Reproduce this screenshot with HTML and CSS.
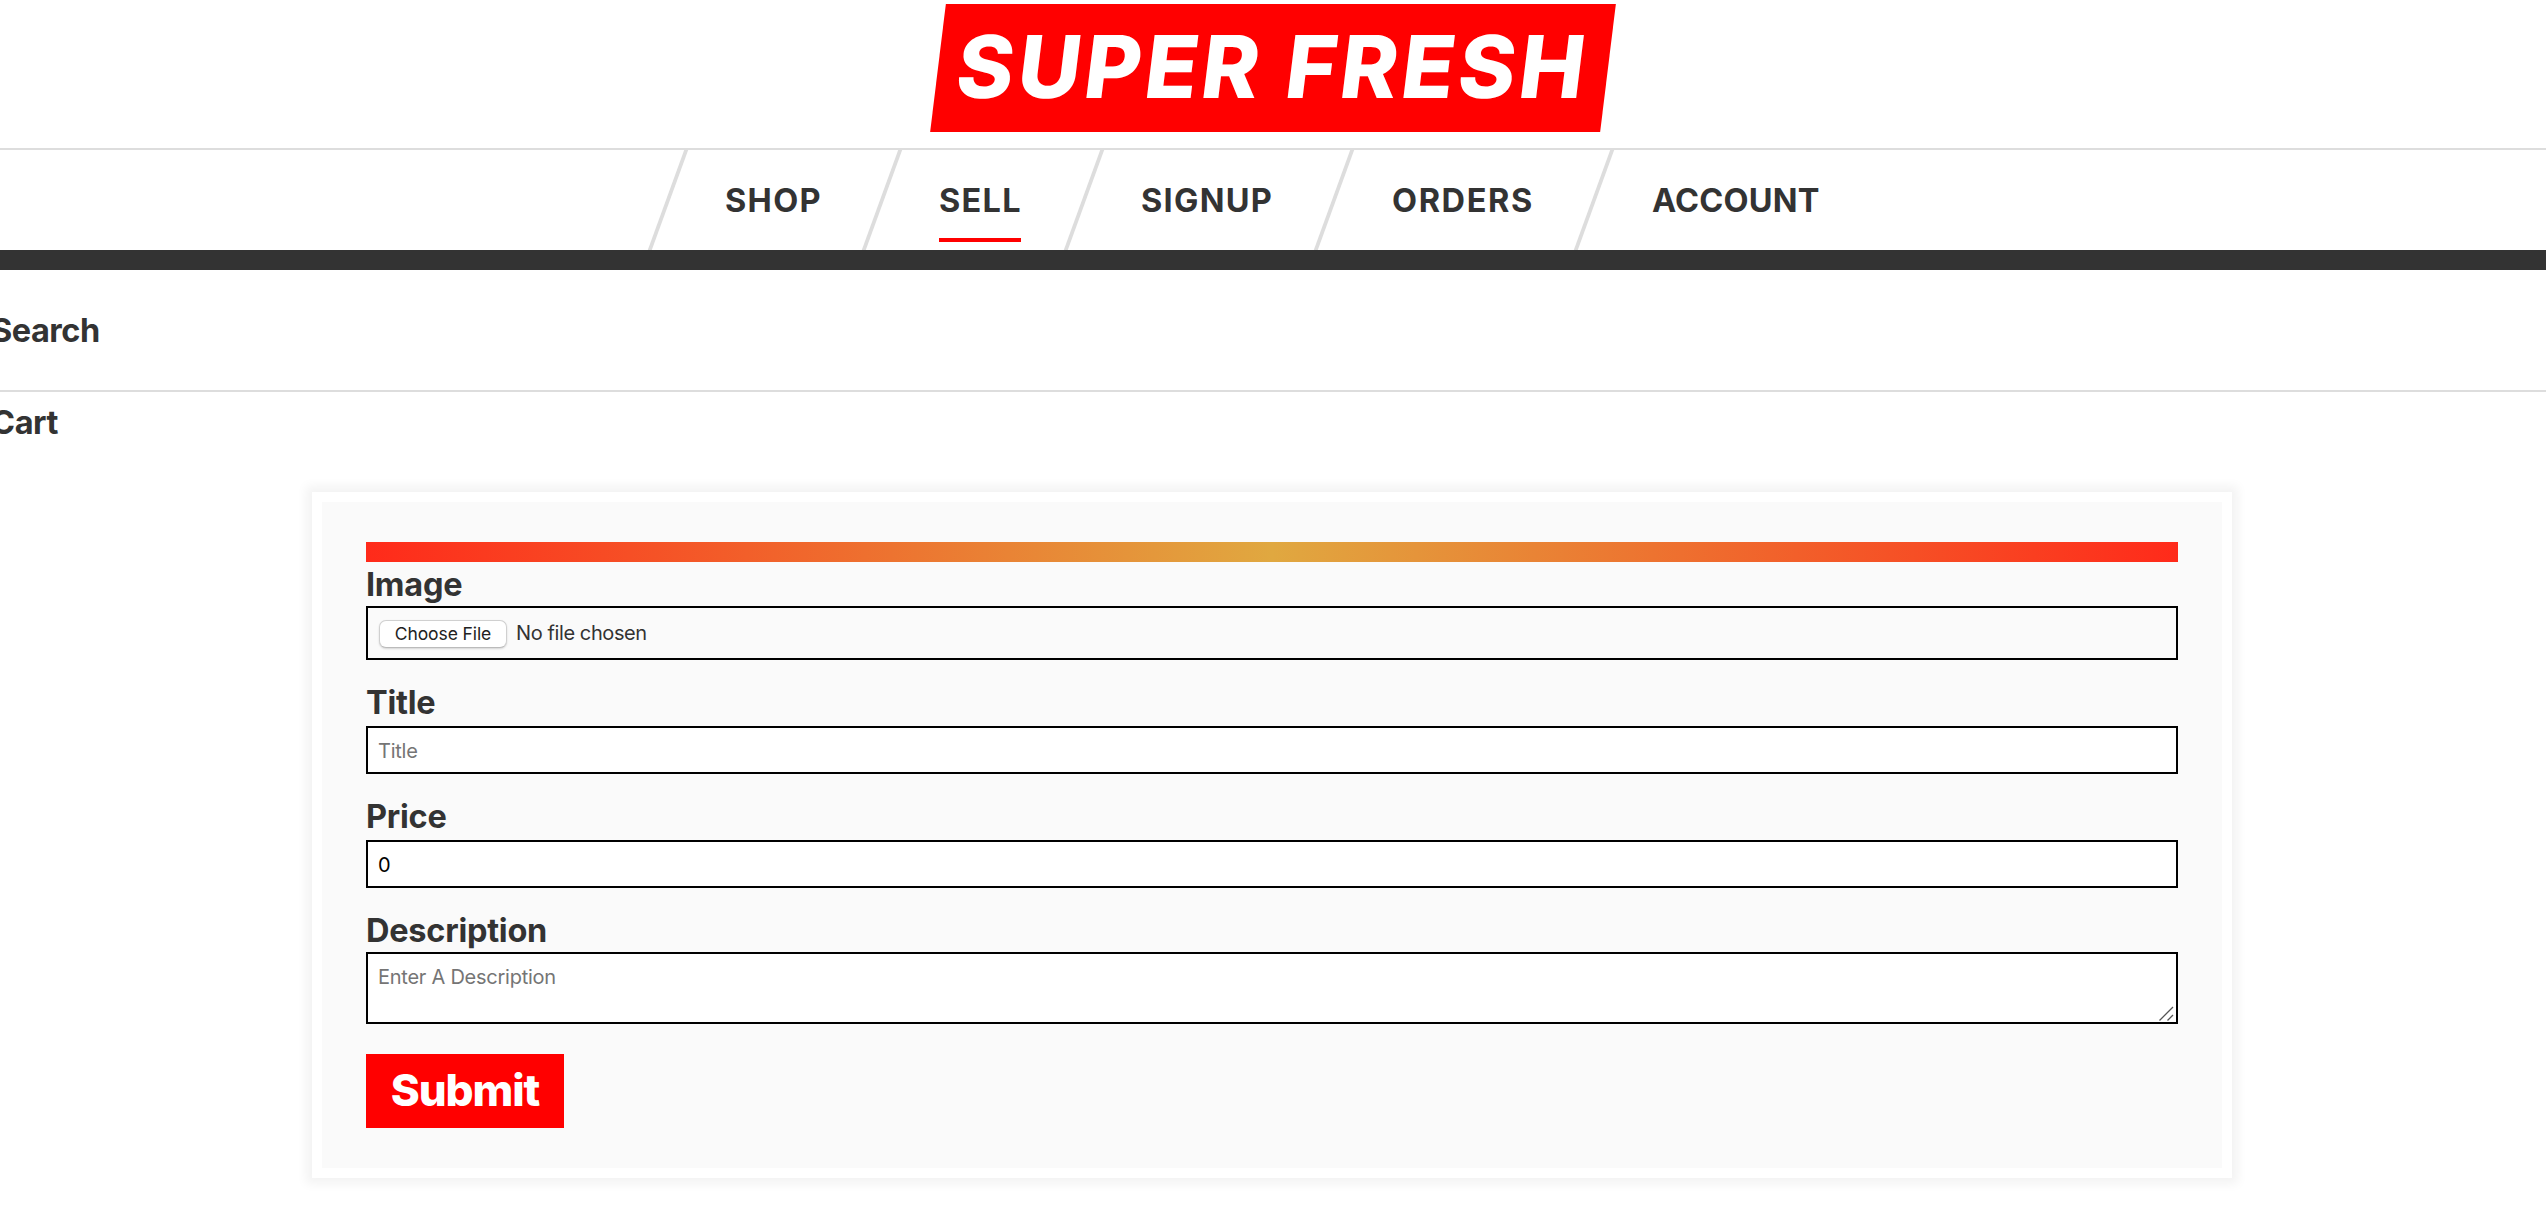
FILE: index.html
```
<!DOCTYPE html>
<html lang="en">
<head>
<meta charset="utf-8">
<title>Super Fresh</title>
<link rel="stylesheet" href="styles.css">
</head>
<body>
<header class="header">
  <div class="brand"><h1 class="logo"><a class="logo-link" href="#">SUPER FRESH</a></h1></div>
  <nav class="nav">
    <a class="nav-link" href="#">SHOP</a>
    <a class="nav-link active" href="#">SELL</a>
    <a class="nav-link" href="#">SIGNUP</a>
    <a class="nav-link orders" href="#">ORDERS</a>
    <a class="nav-link account" href="#">ACCOUNT</a>
  </nav>
  <div class="sub-bar"><p class="sub-text">Search</p></div>
  <div class="cart"><p class="sub-text cart-text">Cart</p></div>
</header>
<main class="inner">
  <form class="form">
    <div class="stripe"></div>
    <label class="field file-field"><span class="label image-label">Image</span>
      <input class="control file" type="file"></label>
    <label class="field"><span class="label">Title</span>
      <input class="control" type="text" placeholder="Title"></label>
    <label class="field"><span class="label">Price</span>
      <input class="control" type="text" value="0"></label>
    <label class="field description"><span class="label description-label">Description</span>
      <textarea class="control area" placeholder="Enter A Description"></textarea>
      <svg class="grip" width="16" height="16" viewBox="0 0 16 16"><path d="M1.5 14.5 15 1M9.5 14.5 15 9" fill="none" stroke="#555" stroke-width="1.3"/></svg></label>
    <button class="submit" type="button">Submit</button>
  </form>
</main>
</body>
</html>
```
FILE: styles.css
```
* { box-sizing: border-box; }
body {
  margin: 0;
  min-height: 1222px;
  background: #fff;
  color: #333;
  font-family: Inter, "Liberation Sans", sans-serif;
}
a { color: inherit; text-decoration: none; }
p { margin: 0; }

.brand {
  display: flex;
  justify-content: center;
  height: 150px;
  padding-top: 4px;
  border-bottom: 2px solid #ddd;
}
.logo {
  width: 670px;
  height: 128px;
  margin: 0;
  background: #f00;
  color: #fff;
  font-size: 86.6px;
  font-weight: 800;
  line-height: 125px;
  letter-spacing: 3.9px;
  text-align: center;
  transform: skewX(-7deg);
}

.nav {
  display: grid;
  grid-template-columns: 214px 202px 250px 260px 288px;
  justify-content: center;
  height: 120px;
  border-bottom: 20px solid #333;
  overflow: hidden;
}
.nav-link {
  position: relative;
  padding-left: 59px;
  font-size: 32.5px;
  font-weight: 700;
  line-height: 101px;
  letter-spacing: 1.3px;
}
.nav-link.orders { padding-left: 60px; letter-spacing: 1.6px; }
.nav-link.account { padding-left: 60px; letter-spacing: 0.2px; }
.nav-link::before {
  content: "";
  position: absolute;
  left: 0;
  top: 0;
  width: 4px;
  height: 100px;
  background: #ddd;
  transform: skewX(-20deg);
}
.nav-link.active::after {
  content: "";
  position: absolute;
  left: 59px;
  top: 88px;
  width: 82px;
  height: 4px;
  background: #f00;
}

.sub-bar {
  height: 122px;
  padding-top: 41px;
  border-bottom: 2px solid #ddd;
}
.sub-text {
  margin-left: -9px;
  font-size: 32.5px;
  font-weight: 700;
  line-height: 40px;
  letter-spacing: -0.5px;
}
.cart { height: 100px; padding-top: 11px; }
.cart-text { letter-spacing: -0.4px; }

.inner { width: 1920px; margin: 0 auto; }
.form {
  position: relative;
  left: -1px;
  height: 686px;
  padding: 40px 44px;
  border: 10px solid #fff;
  background: #fafafa;
  box-shadow: 0 0 10px 6px rgba(0, 0, 0, 0.05);
}
.stripe {
  height: 20px;
  background: linear-gradient(to right, #ff2a1a 0%, #e0a840 50%, #ff2a1a 100%);
}
.field { display: block; height: 114px; }
.file-field { height: 120px; }
.label {
  display: block;
  height: 44px;
  padding-top: 1px;
  font-size: 32.5px;
  font-weight: 700;
  line-height: 40px;
  letter-spacing: -0.25px;
}
.image-label { padding-top: 3px; }
.control {
  display: block;
  width: 100%;
  height: 48px;
  margin: 0;
  padding: 1px 10px 0;
  border: 2px solid #000;
  border-radius: 0;
  background: #fff;
  color: #000;
  font: 400 20px/24px Inter, "Liberation Sans", sans-serif;
  letter-spacing: -0.25px;
}
.control::placeholder { color: #757575; opacity: 1; }
.file {
  height: 54px;
  padding: 11px;
  background: transparent;
  color: #333;
  line-height: 28px;
  letter-spacing: -0.4px;
}
.file::file-selector-button {
  width: 128px;
  height: 28px;
  margin: 0 9px 0 0;
  padding: 0;
  border: 1px solid #d0d0d0;
  border-bottom-color: #bbb;
  border-radius: 7px;
  background: #fff;
  box-shadow: 0 1px 2px rgba(0, 0, 0, 0.15);
  color: #222;
  font: 400 17.5px/26px Inter, "Liberation Sans", sans-serif;
  letter-spacing: -0.1px;
}
.description { position: relative; height: 144px; }
.description-label { height: 42px; }
.area {
  height: 72px;
  padding: 11px 10px 9px;
  resize: none;
}
.grip { position: absolute; right: 4px; top: 96px; }
.submit {
  display: block;
  width: 198px;
  height: 74px;
  margin: 0;
  padding: 0 0 2px;
  border: 0;
  background: #f00;
  color: #fff;
  font: 800 44px/72px Inter, "Liberation Sans", sans-serif;
  letter-spacing: -1.1px;
}
```
